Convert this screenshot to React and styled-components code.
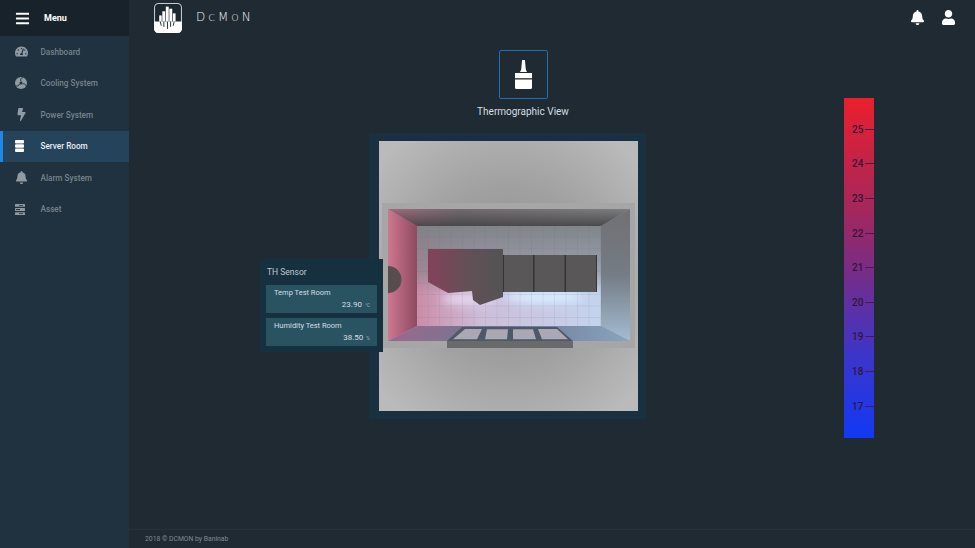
import React from 'react'
import styled, { createGlobalStyle } from 'styled-components'
import { FaBars, FaBell, FaBolt, FaTachometerAlt, FaUser } from 'react-icons/fa'

const GlobalStyle = createGlobalStyle`
  html, body { margin: 0; height: 100%; background: #1f2a33; overflow: hidden; }
  body { font-family: Roboto, "Liberation Sans", sans-serif; }
  #root { height: 100%; }
`

const Page = styled.div`
  display: flex;
  height: 100%;
`

const Sidebar = styled.aside`
  flex: 0 0 129px;
  background: #20313f;
`

const SideHeader = styled.div`
  height: 36px;
  display: flex;
  align-items: center;
  gap: 14px;
  padding-left: 15px;
  background: #18222a;
  color: #fff;
  font-size: 9px;
  font-weight: 700;
  svg { font-size: 15px; }
`

const SideList = styled.nav`
  display: flex;
  flex-direction: column;
`

const SideItem = styled.div`
  height: 31.5px;
  box-sizing: border-box;
  display: flex;
  align-items: center;
  padding-left: ${({ $active }) => ($active ? '12px' : '15px')};
  border-left: ${({ $active }) => ($active ? '3px solid #1e88e5' : '0')};
  background: ${({ $active }) => ($active ? '#25435a' : 'transparent')};
  color: ${({ $active }) => ($active ? '#e8edf0' : '#76838d')};
  font-size: 8.2px;
  font-weight: 500;
`

const SideIcon = styled.span`
  flex: 0 0 25.5px;
  display: flex;
  align-items: center;
  font-size: 13px;
  color: ${({ $active }) => ($active ? '#fff' : '#8f9aa2')};
`

const Main = styled.main`
  flex: 1;
  display: flex;
  flex-direction: column;
  min-width: 0;
`

const Topbar = styled.header`
  flex: 0 0 36px;
  display: flex;
  align-items: center;
  padding: 0 19px 0 25px;
  color: #fff;
`

const Brand = styled.span`
  margin-left: 14px;
  margin-top: -2px;
  font-family: "DejaVu Sans", sans-serif;
  font-size: 12px;
  font-weight: 200;
  letter-spacing: 3px;
  color: #f2f5f6;
  span { font-size: 9.5px; }
`

const TopActions = styled.div`
  margin: -2px 0 0 auto;
  display: flex;
  align-items: center;
  gap: 16px;
  font-size: 15px;
`

const Content = styled.section`
  flex: 1;
  display: flex;
  align-items: flex-start;
  padding: 14px 0 0 240px;
`

const Stage = styled.div`
  flex: 0 0 277px;
  display: flex;
  flex-direction: column;
`

const ToolBlock = styled.div`
  display: flex;
  flex-direction: column;
  align-items: center;
  padding-left: 31px;
`

const ToolButton = styled.div`
  width: 49px;
  height: 49px;
  box-sizing: border-box;
  display: flex;
  align-items: center;
  justify-content: center;
  border: 1.5px solid #1e6fb8;
  border-radius: 2px;
`

const ToolLabel = styled.div`
  margin-top: 6px;
  height: 14px;
  line-height: 14px;
  font-size: 10px;
  color: #d5dde1;
  white-space: nowrap;
`

const Frame = styled.div`
  position: relative;
  margin-top: 14px;
  height: 286px;
  box-sizing: border-box;
  padding: 8px 8px 8px 10px;
  background: #18303f;
`

const Scene = styled.svg`
  display: block;
  width: 259px;
  height: 270px;
  filter: blur(0.5px);
`

const Tooltip = styled.div`
  position: absolute;
  left: -109px;
  top: 126px;
  width: 123px;
  height: 93px;
  box-sizing: border-box;
  padding: 6px 6px 5px;
  background: #15303e;
  display: flex;
  flex-direction: column;
  gap: 5px;
`

const TooltipTitle = styled.div`
  height: 14px;
  line-height: 14px;
  margin-left: 1px;
  margin-bottom: 1px;
  font-size: 8.5px;
  color: #bccad1;
`

const Reading = styled.div`
  height: 28px;
  box-sizing: border-box;
  padding: 2px 7px 0 8px;
  background: #2a5362;
  color: #d3dfe4;
  font-size: 7.5px;
`

const ReadingName = styled.div`
  height: 11px;
  line-height: 11px;
`

const ReadingValue = styled.div`
  text-align: right;
  height: 13px;
  line-height: 13px;
  font-size: 8px;
  small { font-size: 5px; color: #9db0b9; margin-left: 3px; }
`

const Scale = styled.div`
  margin: 48px 0 0 198px;
  width: 30px;
  height: 340px;
  box-sizing: border-box;
  padding-top: 14px;
  background: linear-gradient(#ea1f2c 0%, #a3275e 34%, #7a2c84 50%, #3d35c8 75%, #1239f5 100%);
  display: flex;
  flex-direction: column;
`

const ScaleRow = styled.div`
  height: 34.6px;
  flex: 0 0 34.6px;
  display: flex;
  align-items: center;
  padding-left: 8px;
  gap: 2px;
  font-size: 10px;
  font-weight: 500;
  color: #331538;
  &::after {
    content: '';
    flex: 1;
    height: 1px;
    background: #4a1a48;
  }
`

const Footer = styled.footer`
  flex: 0 0 18px;
  display: flex;
  align-items: center;
  padding-left: 16px;
  border-top: 1px solid #26323b;
  font-size: 6.8px;
  color: #7f8b92;
`

const Logo = () => (
  <svg width="28" height="30" viewBox="0 0 27 29">
    <rect x="0.5" y="0.5" width="26" height="28" rx="4" fill="#1c2730" stroke="#c8ccd0" />
    <path d="M0 18h27v7a4 4 0 0 1-4 4H4a4 4 0 0 1-4-4z" fill="#fff" />
    <g fill="#fff">
      <rect x="5" y="12" width="2.4" height="6" />
      <rect x="8" y="8" width="2.8" height="10" />
      <rect x="11.4" y="3.5" width="2.8" height="14.5" />
      <rect x="14.8" y="5.5" width="2.8" height="12.5" />
      <rect x="18.2" y="10" width="2.6" height="8" />
    </g>
    <g stroke="#1c2730" strokeWidth="0.9" fill="none">
      <path d="M6 18l1 4M9.5 18v5M13 18v7M16 18v5M19.5 18l-1 4" />
    </g>
  </svg>
)

const BrushIcon = () => (
  <svg width="17" height="29" viewBox="0 0 17 29" fill="#fff">
    <path d="M7 .5c0-.6 3-.6 3 0l.7 8c.2 1.500 .8 2.500 1.300 3.500H5c.5-1 1.100-2 1.300-3.500z" />
    <path d="M0 13h17v5.200H0z" />
    <path d="M0 19.400h17V27.500a1.500 1.500 0 0 1-1.500 1.500h-14A1.500 1.500 0 0 1 0 27.500z" />
  </svg>
)

const FanIcon = () => (
  <svg width="12" height="12" viewBox="0 0 12 12">
    <circle cx="6" cy="6" r="6" fill="currentColor" />
    <g stroke="#20313f" strokeWidth="0.9" fill="none">
      <path d="M6 4.300C5 2.500 6 1 8 .6M7.500 6.800C9.300 6.500 10.800 7.500 11.200 9M4.600 7C4 8.500 2.500 9.400 1 9" />
    </g>
    <circle cx="6" cy="6" r="1.500" fill="#20313f" />
  </svg>
)

const ServerIcon = () => (
  <svg width="9" height="12" viewBox="0 0 9 12" fill="currentColor">
    <rect width="9" height="3.500" rx="1" />
    <rect y="4.250" width="9" height="3.500" rx="1" />
    <rect y="8.500" width="9" height="3.500" rx="1" />
  </svg>
)

const AssetIcon = () => (
  <svg width="10" height="11" viewBox="0 0 10 11" fill="currentColor">
    <rect width="10" height="2.800" rx="0.5" />
    <rect y="4.100" width="10" height="2.800" rx="0.5" />
    <rect y="8.200" width="10" height="2.800" rx="0.5" />
    <path d="M4 1h4v.8H4zM1 5.100h4v.8H1zM4 9.200h4v.8H4z" fill="#20313f" />
  </svg>
)

const RoomScene = () => (
  <Scene viewBox="0 0 259 270">
    <defs>
      <radialGradient id="floorBg" cx="50%" cy="50%" r="65%">
        <stop offset="0" stopColor="#8c8c8c" />
        <stop offset="0.55" stopColor="#a2a2a2" />
        <stop offset="1" stopColor="#bababa" />
      </radialGradient>
      <linearGradient id="leftWall" x1="0" x2="1" y1="0" y2="0">
        <stop offset="0" stopColor="#cf7791" />
        <stop offset="1" stopColor="#8e4a60" />
      </linearGradient>
      <linearGradient id="rightWall" x1="0" x2="0" y1="0" y2="1">
        <stop offset="0" stopColor="#6f7073" />
        <stop offset="0.5" stopColor="#757c85" />
        <stop offset="1" stopColor="#a4bcd2" />
      </linearGradient>
      <linearGradient id="ceiling" x1="0" x2="1" y1="0" y2="0">
        <stop offset="0" stopColor="#a36a7e" />
        <stop offset="0.3" stopColor="#716a6d" />
        <stop offset="1" stopColor="#7c7d80" />
      </linearGradient>
      <linearGradient id="ceilingShade" x1="0" x2="0" y1="0" y2="1">
        <stop offset="0" stopColor="#3f3f42" stopOpacity="0" />
        <stop offset="1" stopColor="#3f3f42" stopOpacity="0.8" />
      </linearGradient>
      <linearGradient id="backWall" x1="0" x2="1" y1="0" y2="0">
        <stop offset="0" stopColor="#cb8ca7" />
        <stop offset="0.35" stopColor="#cdbdd9" />
        <stop offset="1" stopColor="#c4d4ee" />
      </linearGradient>
      <linearGradient id="backShade" x1="0" x2="0" y1="0" y2="1">
        <stop offset="0" stopColor="#7d8186" stopOpacity="0.95" />
        <stop offset="0.45" stopColor="#7d8186" stopOpacity="0.6" />
        <stop offset="0.68" stopColor="#7d8186" stopOpacity="0" />
      </linearGradient>
      <linearGradient id="floorGrad" x1="0" x2="1" y1="0" y2="0">
        <stop offset="0" stopColor="#9a6a8c" />
        <stop offset="0.5" stopColor="#6a7896" />
        <stop offset="1" stopColor="#8ca4bd" />
      </linearGradient>
      <linearGradient id="bigCab" x1="0" x2="1" y1="0" y2="0">
        <stop offset="0" stopColor="#84425a" />
        <stop offset="0.55" stopColor="#625056" />
        <stop offset="1" stopColor="#545354" />
      </linearGradient>
      <pattern id="tiles" width="11.5" height="11.5" patternUnits="userSpaceOnUse" x="38" y="85">
        <path d="M11.5 0V11.5H0" fill="none" stroke="#5c5f72" strokeOpacity="0.28" strokeWidth="0.7" />
      </pattern>
      <filter id="glow" x="-40%" y="-60%" width="180%" height="220%">
        <feGaussianBlur stdDeviation="5" />
      </filter>
    </defs>

    <rect width="259" height="270" fill="url(#floorBg)" />
    <rect x="3" y="62" width="253" height="145" fill="#a6a6a6" />

    <polygon points="9,68 38,85 38,185 9,200" fill="url(#leftWall)" />
    <polygon points="251,68 222,85 222,185 251,200" fill="url(#rightWall)" />
    <polygon points="9,68 251,68 222,85 38,85" fill="url(#ceiling)" />
    <polygon points="9,68 251,68 222,85 38,85" fill="url(#ceilingShade)" />
    <polygon points="9,200 38,185 222,185 251,200" fill="url(#floorGrad)" />

    <rect x="38" y="85" width="184" height="100" fill="url(#backWall)" />
    <rect x="38" y="85" width="184" height="100" fill="url(#backShade)" />
    <ellipse cx="165" cy="156" rx="40" ry="7" fill="#d6ecff" filter="url(#glow)" />
    <ellipse cx="90" cy="158" rx="28" ry="6" fill="#e6d8f2" filter="url(#glow)" />
    <rect x="38" y="85" width="184" height="100" fill="url(#tiles)" />

    <polygon points="49,108 124,108 124,156 101,164 94,159 93,150 69,152 49,141" fill="url(#bigCab)" />
    <rect x="124" y="114" width="94" height="37" fill="#353535" />
    <rect x="125" y="114" width="29" height="37" fill="#5a5758" />
    <rect x="155.500" y="114" width="30" height="37" fill="#5a5758" />
    <rect x="187" y="114" width="30" height="37" fill="#5a5758" />
    <path d="M9 125a13.500 13.500 0 0 1 0 27z" fill="#574c4e" />

    <polygon points="83,186 178,186 194,200 68,200" fill="#4d5968" />
    <polygon points="86,188 103,188 98,198.300 74,198.300" fill="#aaa9b3" />
    <polygon points="108,188.300 129,188.300 128,198.300 106,198.300" fill="#aaa9b3" />
    <polygon points="134,188.300 154,188.300 157,198.300 134,198.300" fill="#aaa9b3" />
    <polygon points="159,188 178,188 189,198.300 163,198.300" fill="#aaa9b3" />
    <rect x="68" y="200" width="126" height="7" fill="#6a6a6a" />
  </Scene>
)

const menu = [
  { label: 'Dashboard', icon: <FaTachometerAlt /> },
  { label: 'Cooling System', icon: <FanIcon /> },
  { label: 'Power System', icon: <FaBolt /> },
  { label: 'Server Room', icon: <ServerIcon />, active: true },
  { label: 'Alarm System', icon: <FaBell /> },
  { label: 'Asset', icon: <AssetIcon /> },
]

const App = () => (
  <Page>
    <GlobalStyle />
    <Sidebar>
      <SideHeader>
        <FaBars />
        <span>Menu</span>
      </SideHeader>
      <SideList>
        {menu.map(item => (
          <SideItem key={item.label} $active={item.active}>
            <SideIcon $active={item.active}>{item.icon}</SideIcon>
            {item.label}
          </SideItem>
        ))}
      </SideList>
    </Sidebar>
    <Main>
      <Topbar>
        <Logo />
        <Brand>D<span>C</span>M<span>O</span>N</Brand>
        <TopActions>
          <FaBell />
          <FaUser />
        </TopActions>
      </Topbar>
      <Content>
        <Stage>
          <ToolBlock>
            <ToolButton><BrushIcon /></ToolButton>
            <ToolLabel>Thermographic View</ToolLabel>
          </ToolBlock>
          <Frame>
            <RoomScene />
            <Tooltip>
              <TooltipTitle>TH Sensor</TooltipTitle>
              <Reading>
                <ReadingName>Temp Test Room</ReadingName>
                <ReadingValue>23.90<small>°C</small></ReadingValue>
              </Reading>
              <Reading>
                <ReadingName>Humidity Test Room</ReadingName>
                <ReadingValue>38.50<small>%</small></ReadingValue>
              </Reading>
            </Tooltip>
          </Frame>
        </Stage>
        <Scale>
          {[25, 24, 23, 22, 21, 20, 19, 18, 17].map(n => (
            <ScaleRow key={n}>{n}</ScaleRow>
          ))}
        </Scale>
      </Content>
      <Footer>2018 © DCMON by Baninab</Footer>
    </Main>
  </Page>
)

export default App
